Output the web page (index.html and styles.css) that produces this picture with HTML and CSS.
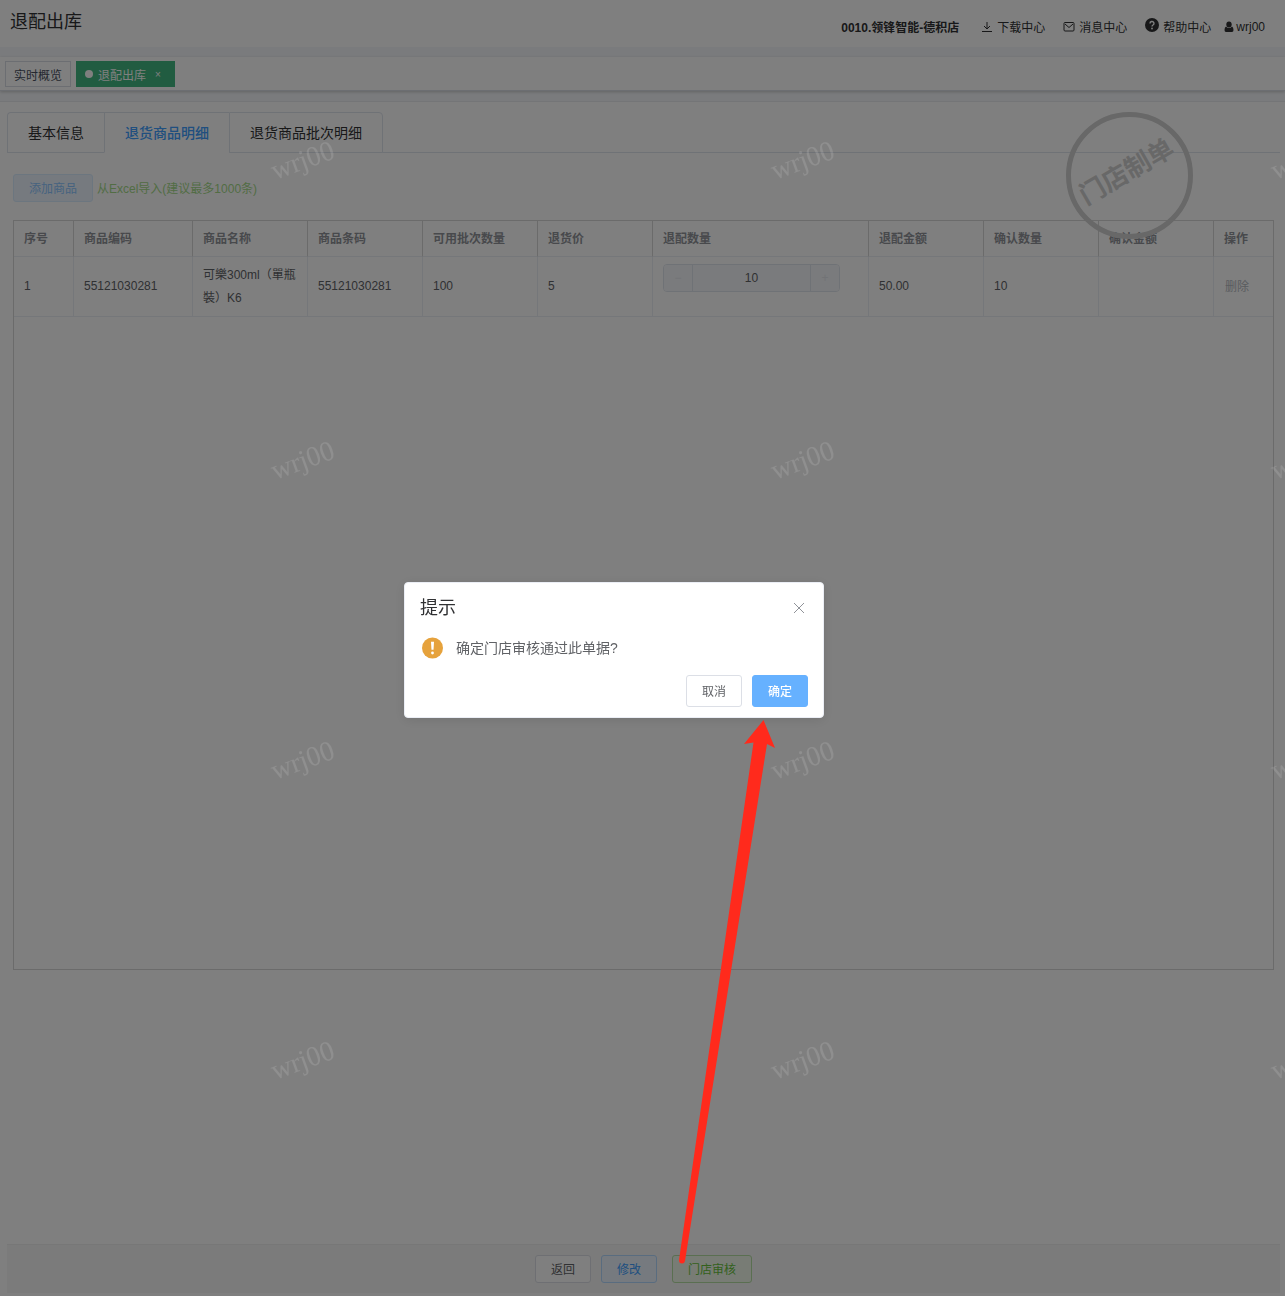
FILE: index.html
```html
<!DOCTYPE html>
<html lang="zh-CN">

<head>
    <meta charset="UTF-8">
    <meta name="viewport" content="width=device-width, initial-scale=1.0">
    <title>退配出库</title>
    <link rel="stylesheet" href="styles.css">
</head>

<body>
    <header class="navbar">
        <h1>退配出库</h1>
        <nav class="right-menu">
            <strong class="store">0010.领锋智能-德积店</strong>
            <a href="#" class="menu-item">
                <svg width="12" height="12" viewBox="0 0 12 12" fill="none" stroke="currentColor">
                    <path d="M6 1v7M3 5l3 3 3-3M1 10.5h10" />
                </svg>
                下载中心
            </a>
            <a href="#" class="menu-item">
                <svg width="12" height="12" viewBox="0 0 12 12" fill="none" stroke="currentColor">
                    <rect x="1" y="1.5" width="10" height="8.5" rx="1" />
                    <path d="M2 3l4 3.500L10 3" />
                </svg>
                消息中心
            </a>
            <a href="#" class="menu-item help">
                <svg width="14" height="18" viewBox="0 0 14 18">
                    <circle cx="7" cy="7" r="7" fill="currentColor" />
                    <path d="M5 5.400a2 1.900 0 1 1 3 1.600q-1 .6-1 1.500" fill="none" stroke="#fff" stroke-width="1.400" />
                    <circle cx="7" cy="10.500" r=".9" fill="#fff" />
                </svg>
                帮助中心
            </a>
            <a href="#" class="menu-item user">
                <svg width="10" height="12" viewBox="0 0 10 12" fill="currentColor">
                    <ellipse cx="5" cy="3.500" rx="2.700" ry="3" />
                    <path d="M2 5.500Q5 8.500 8 5.500 9.500 6 9.500 9q0 2-1.500 2H2Q.5 11 .5 9 .5 6 2 5.500z" />
                </svg>
                wrj00
            </a>
        </nav>
    </header>

    <div class="tags-view">
        <a href="#" class="tag">实时概览</a>
        <a href="#" class="tag active">退配出库<span class="tag-close">×</span></a>
    </div>

    <main class="app-main">
        <div class="tabs" role="tablist">
            <button class="tab" role="tab">基本信息</button>
            <button class="tab active" role="tab" aria-selected="true">退货商品明细</button>
            <button class="tab" role="tab">退货商品批次明细</button>
        </div>
        <div class="stamp"><span>门店制单</span></div>

        <div class="pane">
            <div class="toolbar">
                <button class="btn primary disabled" disabled>添加商品</button>
                <a href="#" class="import-link">从Excel导入(建议最多1000条)</a>
            </div>
            <div class="table-wrap">
                <table>
                    <colgroup>
                        <col class="col-index">
                        <col class="col-code">
                        <col>
                        <col>
                        <col>
                        <col>
                        <col class="col-qty">
                        <col>
                        <col>
                        <col>
                        <col class="col-action">
                    </colgroup>
                    <thead>
                        <tr>
                            <th>序号</th>
                            <th>商品编码</th>
                            <th>商品名称</th>
                            <th>商品条码</th>
                            <th>可用批次数量</th>
                            <th>退货价</th>
                            <th>退配数量</th>
                            <th>退配金额</th>
                            <th>确认数量</th>
                            <th>确认金额</th>
                            <th>操作</th>
                        </tr>
                    </thead>
                    <tbody>
                        <tr>
                            <td>1</td>
                            <td>55121030281</td>
                            <td>可樂300ml（單瓶裝）K6</td>
                            <td>55121030281</td>
                            <td>100</td>
                            <td>5</td>
                            <td class="qty-cell">
                                <div class="input-number">
                                    <button disabled aria-label="减少">−</button>
                                    <input type="text" value="10" aria-label="退配数量" disabled>
                                    <button disabled aria-label="增加">+</button>
                                </div>
                            </td>
                            <td>50.00</td>
                            <td>10</td>
                            <td></td>
                            <td><button class="btn-text" disabled>删除</button></td>
                        </tr>
                    </tbody>
                </table>
            </div>
        </div>

        <footer class="actions">
            <button class="btn">返回</button>
            <button class="btn primary">修改</button>
            <button class="btn success">门店审核</button>
        </footer>
    </main>

    <div class="mask"></div>

    <svg class="watermark" aria-hidden="true">
        <defs>
            <pattern id="wm" width="500" height="300" patternUnits="userSpaceOnUse">
                <text transform="translate(275 180) rotate(-20)">wrj00</text>
            </pattern>
        </defs>
        <rect width="100%" height="100%" fill="url(#wm)" />
    </svg>

    <div class="box-wrapper">
        <div class="message-box" role="dialog" aria-labelledby="box-title">
            <div class="box-header">
                <h2 id="box-title">提示</h2>
                <button class="box-close" aria-label="关闭">
                    <svg width="12" height="12" viewBox="0 0 12 12" fill="none" stroke="currentColor">
                        <path d="M1 1l10 10M11 1L1 11" />
                    </svg>
                </button>
            </div>
            <div class="box-content">
                <svg width="22" height="22" viewBox="0 0 22 22">
                    <circle cx="10.500" cy="11" r="10.500" fill="#e6a23c" />
                    <path d="M9 4.800h3l-.5 8h-2z" fill="#fff" />
                    <circle cx="10.500" cy="16" r="1.400" fill="#fff" />
                </svg>
                <p>确定门店审核通过此单据?</p>
            </div>
            <div class="box-btns">
                <button class="btn">取消</button>
                <button class="btn confirm">确定</button>
            </div>
            <svg class="arrow" width="100" height="546" viewBox="0 0 100 546" aria-hidden="true">
                <path d="M87.500 0L99 28 91 24 9 541Q8.500 543.500 6 543.500 3 543.500 3 540L77.500 22.500 68 24z" fill="#ff2a1c" />
            </svg>
        </div>
    </div>
</body>

</html>
```

FILE: styles.css
```css
* {
    box-sizing: border-box;
}

body {
    margin: 0;
    min-height: 100vh;
    display: flex;
    flex-direction: column;
    background-color: #f5f7fa;
    color: #303133;
    font-family: "Liberation Sans", "Noto Sans CJK SC", sans-serif;
    font-size: 12px;
}

a {
    color: inherit;
    text-decoration: none;
}

button,
input {
    font: inherit;
}

/* top bar */
.navbar {
    display: flex;
    justify-content: space-between;
    height: 47px;
    padding: 0 20px 0 10px;
    background-color: #fff;
}

.navbar h1 {
    margin: 0;
    font-size: 18px;
    font-weight: 400;
    line-height: 44px;
}

.right-menu {
    display: flex;
    align-items: center;
    padding-top: 6px;
}

.store {
    margin-right: 22px;
}

.menu-item {
    display: flex;
    align-items: center;
    gap: 4px;
    margin-right: 18px;
}

.menu-item.help {
    margin-right: 13px;
}

.menu-item.user {
    gap: 2px;
    margin-right: 0;
}

/* opened pages */
.tags-view {
    display: flex;
    gap: 5px;
    height: 34px;
    margin: 10px 0;
    padding: 4px 5px;
    background-color: #fff;
    border-bottom: 1px solid #d8dce5;
    box-shadow: 0 1px 3px 0 rgba(0, 0, 0, .2);
}

.tag {
    display: flex;
    align-items: center;
    height: 26px;
    padding: 0 8px;
    border: 1px solid #d8dce5;
    background-color: #fff;
    color: #495060;
}

.tag.active {
    border-color: #42b983;
    background-color: #42b983;
    color: #fff;
}

.tag.active::before {
    content: "";
    width: 8px;
    height: 8px;
    margin-right: 5px;
    border-radius: 50%;
    background-color: #fff;
}

.tag-close {
    width: 16px;
    margin-left: 4px;
    font-size: 10px;
    text-align: center;
}

/* content */
.app-main {
    position: relative;
    flex: 1;
    display: flex;
    flex-direction: column;
    padding: 10px 5px 3px 7px;
    border-top: 1px solid #e8eaee;
    background-color: #fff;
}

.tabs {
    display: flex;
    height: 41px;
    border-bottom: 1px solid #dfe4ed;
}

.tab {
    height: 41px;
    padding: 0 20px 2px;
    border: 1px solid #dfe4ed;
    border-right: 0;
    background-color: #fff;
    color: #303133;
    font-size: 14px;
}

.tab:first-child {
    border-top-left-radius: 4px;
}

.tab:last-child {
    border-right: 1px solid #dfe4ed;
    border-top-right-radius: 4px;
}

.tab.active {
    border-bottom-color: #fff;
    color: #409eff;
    font-weight: 500;
}

.stamp {
    position: absolute;
    top: 10px;
    right: 92px;
    width: 127px;
    height: 127px;
    display: flex;
    align-items: center;
    justify-content: center;
    border: 5px solid #d0d0d0;
    border-radius: 50%;
    color: #d0d0d0;
    font-size: 26px;
    font-weight: 700;
    line-height: 36px;
}

.stamp span {
    padding-bottom: 10px;
    transform: rotate(-30deg);
}

.pane {
    flex: 1;
    padding: 21px 6px 0;
}

.toolbar {
    display: flex;
    align-items: center;
    gap: 4px;
    margin-bottom: 18px;
}

.import-link {
    padding-bottom: 2px;
    color: #a4da89;
}

.btn {
    height: 28px;
    padding: 0 15px 2px;
    border: 1px solid #dcdfe6;
    border-radius: 3px;
    background-color: #fff;
    color: #606266;
}

.btn.primary {
    border-color: #b3d8ff;
    background-color: #ecf5ff;
    color: #409eff;
}

.btn.success {
    border-color: #b5dea3;
    background-color: #f0f9eb;
    color: #67c23a;
}

.btn.disabled {
    border-color: #d9ecff;
    color: #8cc5ff;
}

.table-wrap {
    height: 750px;
    border: 1px solid #d6d6d6;
}

table {
    width: 100%;
    table-layout: fixed;
    border-collapse: separate;
    border-spacing: 0;
}

.col-index {
    width: 60px;
}

.col-code {
    width: 119px;
}

.col-qty {
    width: 216px;
}

.col-action {
    width: 59px;
}

th,
td {
    padding: 0 10px;
    border-right: 1px solid #ebeef5;
    border-bottom: 1px solid #ebeef5;
    line-height: 23px;
    text-align: left;
}

th {
    height: 36px;
    padding-top: 2px;
    border-right-color: #d6d6d6;
    color: #909399;
    font-weight: 700;
}

td {
    height: 60px;
    color: #606266;
}

th:last-child,
td:last-child {
    border-right: 0;
}

.qty-cell {
    padding-top: 7px;
    vertical-align: top;
}

.input-number {
    display: flex;
    width: 177px;
    height: 28px;
    border: 1px solid #dfe4ed;
    border-radius: 4px;
    overflow: hidden;
}

.input-number button {
    width: 28px;
    padding: 0;
    border: 0;
    background-color: #f5f7fa;
    color: #e4e7ed;
}

.input-number input {
    flex: 1;
    min-width: 0;
    padding: 0;
    border: solid #dfe4ed;
    border-width: 0 1px;
    background-color: #f5f7fa;
    color: #606266;
    text-align: center;
}

.btn-text {
    padding: 2px 1px 0;
    border: 0;
    background: none;
    color: #b4b8c0;
}

.actions {
    display: flex;
    justify-content: center;
    gap: 10px;
    padding: 10px 0;
    border-top: 1px solid #eee;
    background-color: #f6f6f6;
}

.actions .success {
    margin-left: 5px;
}

/* overlays */
.mask {
    position: fixed;
    inset: 0;
    background-color: rgba(0, 0, 0, .5);
}

.watermark {
    position: fixed;
    inset: 0;
    width: 100%;
    height: 100%;
    pointer-events: none;
}

.watermark text {
    fill: rgba(255, 255, 255, .12);
    font-family: "Liberation Serif", serif;
    font-size: 28px;
}

.box-wrapper {
    position: fixed;
    inset: 0;
    display: flex;
    align-items: center;
    justify-content: center;
    padding: 4px 57px 0 0;
}

.message-box {
    position: relative;
    width: 420px;
    padding-bottom: 10px;
    border: 1px solid #ebeef5;
    border-radius: 4px;
    background-color: #fff;
    box-shadow: 0 2px 12px 0 rgba(0, 0, 0, .1);
}

.box-header {
    display: flex;
    justify-content: space-between;
    padding: 16px 18px 9px 15px;
}

.box-header h2 {
    margin: 0;
    font-size: 18px;
    font-weight: 400;
    line-height: 18px;
}

.box-close {
    height: 18px;
    padding: 2px 0 0;
    border: 0;
    background: none;
    color: #909399;
    line-height: 12px;
}

.box-content {
    display: flex;
    align-items: center;
    gap: 12px;
    padding: 10px 17px;
    color: #606266;
    font-size: 14px;
    line-height: 24px;
}

.box-content p {
    margin: 0;
}

.box-btns {
    display: flex;
    justify-content: flex-end;
    gap: 10px;
    padding: 5px 15px 0;
}

.box-btns .btn {
    height: 32px;
}

.box-btns .confirm {
    border-color: #66b1ff;
    background-color: #66b1ff;
    color: #fff;
    font-weight: 500;
}

.arrow {
    position: absolute;
    top: 137px;
    left: 271px;
    pointer-events: none;
}
```
